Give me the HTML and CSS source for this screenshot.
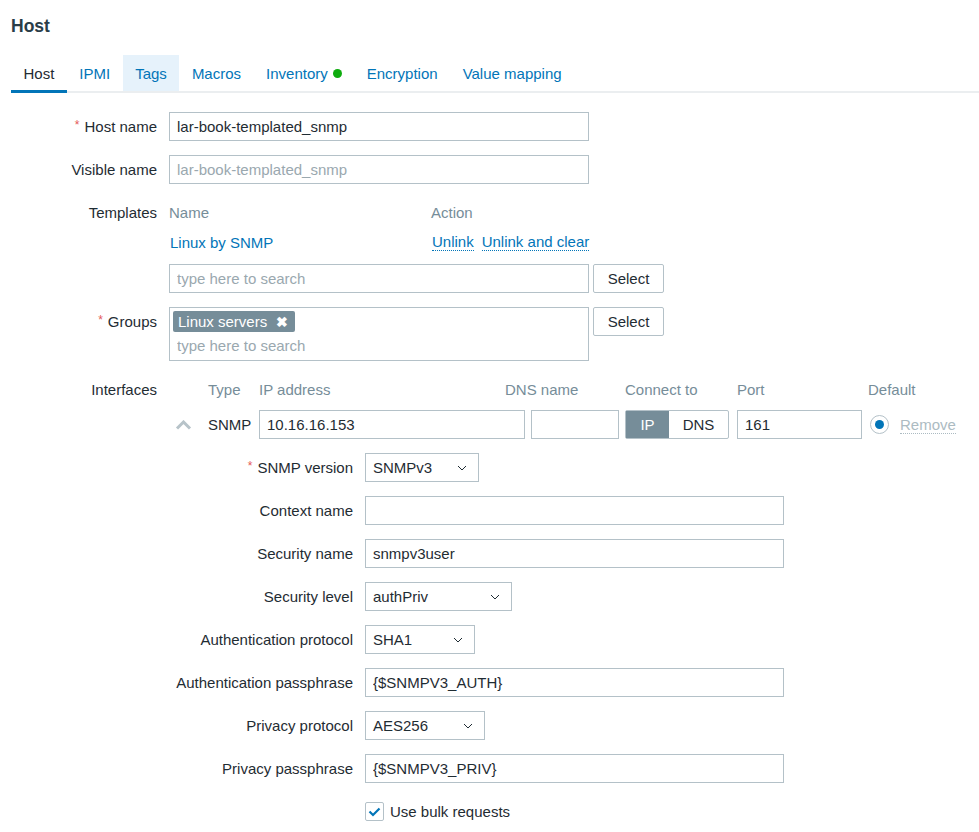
FILE: index.html
```html
<!DOCTYPE html>
<html lang="en">

<head>
  <meta charset="UTF-8">
  <meta name="viewport" content="width=device-width, initial-scale=1.0">
  <title>Host</title>
  <link rel="stylesheet" href="styles.css">
</head>

<body>
  <h1 class="page-title">Host</h1>

  <nav class="tabs">
    <a class="tab active">Host</a>
    <a class="tab">IPMI</a>
    <a class="tab hover">Tags</a>
    <a class="tab">Macros</a>
    <a class="tab">Inventory <span class="dot"></span></a>
    <a class="tab">Encryption</a>
    <a class="tab">Value mapping</a>
  </nav>

  <form class="form-list">
    <label class="label required">Host name</label>
    <div class="field"><input class="input wide" type="text" value="lar-book-templated_snmp"></div>

    <label class="label">Visible name</label>
    <div class="field"><input class="input wide" type="text" placeholder="lar-book-templated_snmp"></div>

    <label class="label">Templates</label>
    <div class="field">
      <div class="templates">
        <span class="col-head">Name</span>
        <span class="col-head">Action</span>
        <a class="link">Linux by SNMP</a>
        <span class="actions">
          <a class="link dotted">Unlink</a>
          <a class="link dotted">Unlink and clear</a>
        </span>
      </div>
      <div class="with-button">
        <input class="input wide" type="text" placeholder="type here to search">
        <button class="btn" type="button">Select</button>
      </div>
    </div>

    <label class="label required">Groups</label>
    <div class="field">
      <div class="with-button">
        <div class="multiselect">
          <span class="chip">Linux servers <b class="chip-x">&#10006;</b></span>
          <input class="ms-input" type="text" placeholder="type here to search">
        </div>
        <button class="btn" type="button">Select</button>
      </div>
    </div>

    <label class="label">Interfaces</label>
    <div class="field">
      <div class="iface">
        <span></span>
        <span class="col-head">Type</span>
        <span class="col-head">IP address</span>
        <span class="col-head dns-head">DNS name</span>
        <span class="col-head">Connect to</span>
        <span class="col-head">Port</span>
        <span class="col-head">Default</span>

        <span class="toggle-icon">
          <svg width="17" height="10" viewBox="0 0 17 10"><path d="M2 8.5 L8.5 2 L15 8.5" fill="none" stroke="#b7c3c9" stroke-width="3"/></svg>
        </span>
        <span class="type">SNMP</span>
        <input class="input" type="text" value="10.16.16.153">
        <input class="input" type="text" value="">
        <span class="switch"><span class="on">IP</span><span>DNS</span></span>
        <input class="input" type="text" value="161">
        <span class="default">
          <span class="radio"></span>
          <a class="remove">Remove</a>
        </span>
      </div>

      <div class="snmp">
        <label class="label required">SNMP version</label>
        <div><span class="select s-version">SNMPv3 <svg class="caret" width="10" height="6" viewBox="0 0 10 6"><path d="M1 1 L5 5 L9 1" fill="none" stroke="#1f2c33" stroke-width="1"/></svg></span></div>

        <label class="label">Context name</label>
        <div><input class="input mid" type="text" value=""></div>

        <label class="label">Security name</label>
        <div><input class="input mid" type="text" value="snmpv3user"></div>

        <label class="label">Security level</label>
        <div><span class="select s-level">authPriv <svg class="caret" width="10" height="6" viewBox="0 0 10 6"><path d="M1 1 L5 5 L9 1" fill="none" stroke="#1f2c33" stroke-width="1"/></svg></span></div>

        <label class="label">Authentication protocol</label>
        <div><span class="select s-auth">SHA1 <svg class="caret" width="10" height="6" viewBox="0 0 10 6"><path d="M1 1 L5 5 L9 1" fill="none" stroke="#1f2c33" stroke-width="1"/></svg></span></div>

        <label class="label">Authentication passphrase</label>
        <div><input class="input mid" type="text" value="{$SNMPV3_AUTH}"></div>

        <label class="label">Privacy protocol</label>
        <div><span class="select s-priv">AES256 <svg class="caret" width="10" height="6" viewBox="0 0 10 6"><path d="M1 1 L5 5 L9 1" fill="none" stroke="#1f2c33" stroke-width="1"/></svg></span></div>

        <label class="label">Privacy passphrase</label>
        <div><input class="input mid" type="text" value="{$SNMPV3_PRIV}"></div>

        <span></span>
        <div class="check-row">
          <span class="checkbox">
            <svg width="13" height="10" viewBox="0 0 13 10"><path d="M1.5 4.5 L5 8 L11.5 1.5" fill="none" stroke="#0275b8" stroke-width="2.2"/></svg>
          </span>
          Use bulk requests
        </div>
      </div>
    </div>
  </form>
</body>

</html>
```

FILE: styles.css
```css
body {
  background: #fff;
  color: #1f2c33;
  font-family: "Liberation Sans", Arial, sans-serif;
  font-size: 15px;
  margin: 0;
  padding: 0 0 0 11px;
}

.page-title {
  color: #2a3d48;
  font-size: 17.5px;
  font-weight: bold;
  height: 55px;
  line-height: 52px;
  margin: 0;
}

.tabs {
  box-shadow: inset 0 -2px 0 #ebeef0;
  display: flex;
  height: 38px;

  .tab {
    align-items: center;
    color: #0275b8;
    display: flex;
    gap: 5px;
    padding: 0 12.5px 1px;

    &.active {
      box-shadow: inset 0 -3px 0 #0275b8;
      color: #1f2c33;
    }

    &.hover {
      background: #e6f2fb;
      box-shadow: inset 0 -2px 0 #ebeef0;
    }
  }

  .dot {
    background: #0eac0e;
    border-radius: 50%;
    display: inline-block;
    height: 9px;
    width: 9px;
  }
}

.form-list {
  column-gap: 12px;
  display: grid;
  grid-template-columns: 146px 1fr;
  margin-top: 19px;
  row-gap: 14px;
}

.label {
  height: 29px;
  line-height: 29px;
  text-align: right;
  white-space: nowrap;

  &.required::before {
    color: #e45959;
    content: "*";
    font-size: 12px;
    line-height: 0;
    margin-right: 5px;
    vertical-align: 3px;
  }
}

.input {
  border: 1px solid #b4c1c8;
  box-sizing: border-box;
  color: #1f2c33;
  display: block;
  font-family: inherit;
  font-size: 15px;
  height: 29px;
  margin: 0;
  outline: none;
  padding: 0 7px;
  width: 100%;

  &::placeholder {
    color: #9aa8af;
  }

  &.wide {
    width: 420px;
  }

  &.mid {
    width: 419px;
  }
}

.link {
  color: #0275b8;

  &.dotted {
    border-bottom: 1px dotted #0275b8;
  }
}

.col-head {
  color: #768d99;
}

.templates {
  display: grid;
  grid-auto-rows: 30px;
  grid-template-columns: 262px auto;
  line-height: 29px;
  margin-bottom: 6px;

  .link {
    padding-left: 1px;
  }

  .actions {
    display: flex;
    gap: 8px;
    padding-left: 1px;

    .link {
      height: 17px;
      line-height: 18px;
      margin-top: 5px;
      padding-left: 0;
    }
  }
}

.with-button {
  align-items: flex-start;
  display: flex;
  gap: 4px;
}

.btn {
  background: #fff;
  border: 1px solid #b4c1c8;
  border-radius: 2px;
  color: #1f2c33;
  font-family: inherit;
  font-size: 15px;
  height: 29px;
  padding: 0;
  width: 71px;
}

.multiselect {
  border: 1px solid #b4c1c8;
  box-sizing: border-box;
  display: flex;
  flex-direction: column;
  height: 54px;
  padding: 3px 3px 0;
  width: 420px;

  .chip {
    align-items: center;
    align-self: flex-start;
    background: #768d99;
    border-radius: 2px;
    color: #fff;
    display: flex;
    gap: 9px;
    height: 21px;
    padding: 0 7px 0 5px;
  }

  .chip-x {
    font-size: 14px;
  }

  .ms-input {
    border: none;
    font-family: inherit;
    font-size: 15px;
    height: 26px;
    outline: none;
    padding: 0 4px;

    &::placeholder {
      color: #9aa8af;
    }
  }
}

.iface {
  align-items: center;
  column-gap: 6px;
  display: grid;
  grid-template-columns: 33px 45px 266px 88px 106px 125px auto;
  grid-template-rows: 29px 29px;
  line-height: 29px;
  row-gap: 6px;

  .dns-head {
    margin-left: -26px;
    white-space: nowrap;
  }

  .toggle-icon {
    display: flex;
    padding-left: 6px;
  }

  .switch {
    border: 1px solid #b4c1c8;
    border-radius: 2px;
    box-sizing: border-box;
    display: flex;
    height: 29px;
    width: 104px;

    span {
      flex: 1;
      line-height: 27px;
      text-align: center;
    }

    .on {
      background: #768d99;
      color: #fff;
      flex: 0 0 43px;
    }
  }

  .default {
    align-items: center;
    display: flex;
    gap: 11px;
    padding-left: 2px;
  }

  .radio {
    align-items: center;
    border: 1px solid #b4c1c8;
    border-radius: 50%;
    box-sizing: border-box;
    display: flex;
    height: 19px;
    justify-content: center;
    width: 19px;

    &::after {
      background: #0275b8;
      border-radius: 50%;
      content: "";
      height: 9px;
      width: 9px;
    }
  }

  .remove {
    border-bottom: 1px dotted #acbbc2;
    color: #acbbc2;
    line-height: 17px;
  }
}

.snmp {
  column-gap: 12px;
  display: grid;
  grid-template-columns: 184px 1fr;
  margin-top: 14px;
  row-gap: 14px;
}

.select {
  align-items: center;
  border: 1px solid #b4c1c8;
  box-sizing: border-box;
  display: flex;
  height: 29px;
  justify-content: space-between;
  padding: 0 11px 0 7px;

  &.s-version {
    width: 114px;
  }

  &.s-level {
    width: 147px;
  }

  &.s-auth {
    width: 110px;
  }

  &.s-priv {
    width: 120px;
  }
}

.check-row {
  align-items: center;
  display: flex;
  gap: 6px;
  height: 29px;

  .checkbox {
    align-items: center;
    border: 1px solid #b4c1c8;
    border-radius: 2px;
    box-sizing: border-box;
    display: flex;
    height: 19px;
    justify-content: center;
    width: 19px;
  }
}
```
